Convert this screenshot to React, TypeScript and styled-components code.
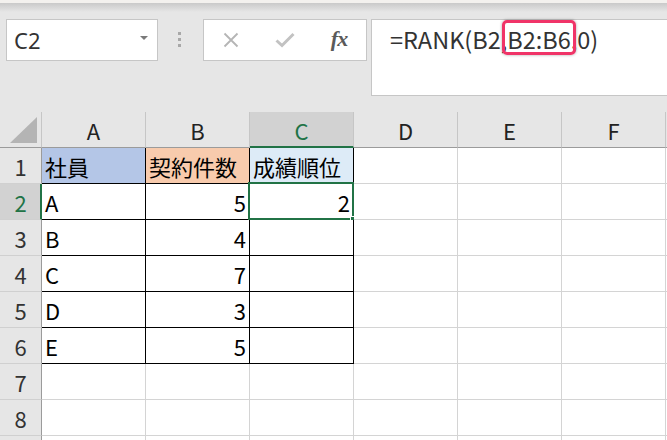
import React from 'react';
import styled, { createGlobalStyle } from 'styled-components';

const Global = createGlobalStyle`
  html, body { margin: 0; padding: 0; background: #fff; overflow: hidden; }
  body { font-family: "Noto Sans CJK JP", "Noto Sans", sans-serif; }
`;

const Page = styled.div`
  width: 667px;
  height: 440px;
  overflow: hidden;
  display: flex;
  flex-direction: column;
  background: #fff;
`;

const TopEdge = styled.div`
  flex: none;
  height: 3px;
  background: #f3f1ee;
`;

const Toolbar = styled.div`
  flex: none;
  height: 109px;
  box-sizing: border-box;
  background: linear-gradient(#c9c9c9 0, #e6e6e6 9px, #e6e6e6 100%);
  display: flex;
  align-items: flex-start;
  padding: 16px 0 0 6px;
`;

const NameBox = styled.div`
  flex: none;
  width: 152px;
  height: 42px;
  box-sizing: border-box;
  background: #fff;
  border: 1px solid #c6c6c6;
  display: flex;
  align-items: center;
  justify-content: space-between;
  padding: 0 9px 0 7px;
  font-family: "Noto Sans", sans-serif;
  font-size: 22px;
  color: #333;
`;

const Caret = styled.span`
  width: 0;
  height: 0;
  border-left: 4px solid transparent;
  border-right: 4px solid transparent;
  border-top: 4px solid #7a7a7a;
  margin-top: -4px;
`;

const Grip = styled.div`
  flex: none;
  margin: 13px 0 0 20px;
  display: flex;
  flex-direction: column;
  gap: 3px;
`;

const GripDot = styled.span`
  width: 3px;
  height: 3px;
  background: #a8a8a8;
`;

const FxBox = styled.div`
  flex: none;
  margin-left: 22px;
  width: 164px;
  height: 42px;
  box-sizing: border-box;
  background: #fff;
  border: 1px solid #c6c6c6;
  display: flex;
  align-items: center;
  justify-content: space-around;
`;

const IconSlot = styled.span`
  width: 30px;
  display: flex;
  justify-content: center;
  align-items: center;
`;

const FxGlyph = styled.span`
  font-family: "Liberation Serif", "DejaVu Serif", serif;
  font-style: italic;
  font-weight: bold;
  font-size: 22px;
  color: #5a5a5a;
  letter-spacing: -1px;
  margin-top: -2px;
`;

const FormulaBar = styled.div`
  flex: 1;
  margin-left: 4px;
  height: 77px;
  box-sizing: border-box;
  background: #fff;
  border: 1px solid #c6c6c6;
  border-right: none;
  padding: 3px 0 0 18px;
  font-family: "Noto Sans CJK JP", "Noto Sans", sans-serif;
  font-size: 23.5px;
  line-height: 32px;
  color: #333;
  white-space: nowrap;
`;

const Ref = styled.span`
  position: relative;
  &::after {
    content: "";
    position: absolute;
    left: -5px;
    right: -5px;
    top: -2px;
    bottom: 1px;
    border: 3px solid #f03468;
    border-radius: 5px;
    box-shadow: 0 0 3px rgba(0, 0, 0, 0.35);
  }
`;

const Sheet = styled.div`
  display: grid;
  grid-template-columns: 42px repeat(7, 104px);
  grid-template-rows: repeat(10, 36px);
  font-family: "Noto Sans CJK JP", "Noto Sans", sans-serif;
`;

const Corner = styled.div`
  box-sizing: border-box;
  background: #e6e6e6;
  border-right: 1px solid #c6c6c6;
  border-bottom: 1px solid #9b9b9b;
  display: flex;
  align-items: flex-start;
  justify-content: flex-start;
`;

const ColHead = styled.div<{ $active?: boolean }>`
  box-sizing: border-box;
  background: ${p => (p.$active ? '#d2d2d2' : '#e6e6e6')};
  border-right: 1px solid #c6c6c6;
  border-bottom: ${p => (p.$active ? '2px solid #217346' : '1px solid #9b9b9b')};
  color: ${p => (p.$active ? '#217346' : '#222')};
  font-size: 22px;
  display: flex;
  align-items: center;
  justify-content: center;
  padding-top: ${p => (p.$active ? '1px' : '0')};
`;

const RowHead = styled.div<{ $active?: boolean }>`
  box-sizing: border-box;
  background: ${p => (p.$active ? '#d2d2d2' : '#e6e6e6')};
  border-right: ${p => (p.$active ? '2px solid #217346' : '1px solid #9b9b9b')};
  border-bottom: 1px solid #d0d0d0;
  color: ${p => (p.$active ? '#217346' : '#333')};
  font-size: 22px;
  display: flex;
  align-items: center;
  justify-content: center;
  padding-left: ${p => (p.$active ? '1px' : '0')};
`;

const Cell = styled.div<{ $fill?: string; $boxed?: boolean; $right?: boolean }>`
  position: relative;
  box-sizing: border-box;
  background: ${p => p.$fill || '#fff'};
  border-right: 1px solid ${p => (p.$boxed ? '#000' : '#d4d4d4')};
  border-bottom: 1px solid ${p => (p.$boxed ? '#000' : '#d4d4d4')};
  display: flex;
  align-items: center;
  justify-content: ${p => (p.$right ? 'flex-end' : 'flex-start')};
  padding: 0 3px 0 3px;
  font-size: 22px;
  color: #000;
  white-space: nowrap;
`;

const Selection = styled.div`
  position: absolute;
  left: -2px;
  top: -2px;
  right: -1px;
  bottom: -1px;
  border: 2px solid #217346;
  pointer-events: none;
  &::after {
    content: "";
    position: absolute;
    right: -5px;
    bottom: -5px;
    width: 6px;
    height: 6px;
    background: #217346;
    border: 1px solid #fff;
    border-right: none;
    border-bottom: none;
  }
`;

type Row = { a: string; b: string; c: string };
const rows: Row[] = [
  { a: 'A', b: '5', c: '2' },
  { a: 'B', b: '4', c: '' },
  { a: 'C', b: '7', c: '' },
  { a: 'D', b: '3', c: '' },
  { a: 'E', b: '5', c: '' },
];

const cols = ['A', 'B', 'C', 'D', 'E', 'F', ''];

export default function App() {
  return (
    <Page>
      <Global />
      <TopEdge />
      <Toolbar>
        <NameBox>
          <span>C2</span>
          <Caret />
        </NameBox>
        <Grip>
          <GripDot />
          <GripDot />
          <GripDot />
        </Grip>
        <FxBox>
          <IconSlot>
            <svg width="16" height="16" viewBox="0 0 16 16">
              <path d="M1.5 1.5 L14.5 14.5 M14.5 1.5 L1.5 14.5" stroke="#b5b5b5" strokeWidth="1.8" fill="none" />
            </svg>
          </IconSlot>
          <IconSlot>
            <svg width="20" height="16" viewBox="0 0 20 16">
              <path d="M1.5 8.5 L7 13.5 L18.5 2" stroke="#c2c2c2" strokeWidth="3" fill="none" />
            </svg>
          </IconSlot>
          <IconSlot>
            <FxGlyph>fx</FxGlyph>
          </IconSlot>
        </FxBox>
        <FormulaBar>
          =RANK(B2,<Ref>B2:B6</Ref>,0)
        </FormulaBar>
      </Toolbar>
      <Sheet>
        <Corner>
          <svg width="40" height="35" viewBox="0 0 40 35">
            <polygon points="10,31 37,31 37,5" fill="#b4b4b4" />
          </svg>
        </Corner>
        {cols.map((c, i) => (
          <ColHead key={i} $active={c === 'C'}>{c}</ColHead>
        ))}

        <RowHead>1</RowHead>
        <Cell $boxed $fill="#b4c6e7">社員</Cell>
        <Cell $boxed $fill="#f8cbad">契約件数</Cell>
        <Cell $boxed $fill="#ddebf7">成績順位</Cell>
        {[0, 1, 2, 3].map(i => <Cell key={i} />)}

        {rows.map((r, i) => (
          <React.Fragment key={r.a}>
            <RowHead $active={i === 0}>{i + 2}</RowHead>
            <Cell $boxed>{r.a}</Cell>
            <Cell $boxed $right>{r.b}</Cell>
            <Cell $boxed $right>
              {r.c}
              {i === 0 && <Selection />}
            </Cell>
            {[0, 1, 2, 3].map(j => <Cell key={j} />)}
          </React.Fragment>
        ))}

        {['7', '8', ''].map((n, k) => (
          <React.Fragment key={k}>
            <RowHead>{n}</RowHead>
            {cols.map((c, i) => <Cell key={i} />)}
          </React.Fragment>
        ))}
      </Sheet>
    </Page>
  );
}
